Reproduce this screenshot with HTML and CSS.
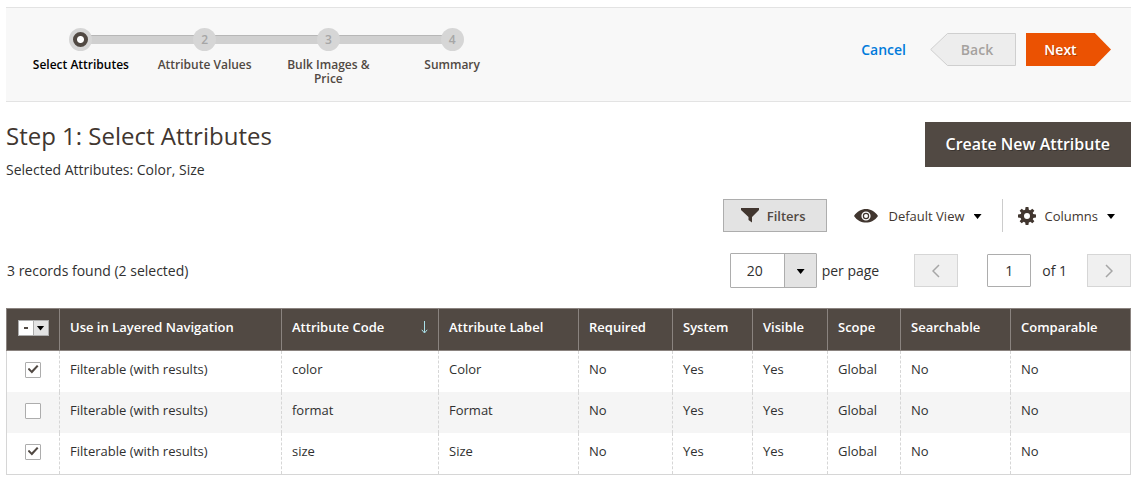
FILE: index.html
```html
<!DOCTYPE html>
<html lang="en">
<head>
<meta charset="utf-8">
<title>Select Attributes</title>
<link rel="stylesheet" href="styles.css">
</head>
<body>
<header class="wizard">
  <ol class="steps">
    <li class="step step-active"><span class="dot"></span><span class="step-label">Select Attributes</span></li>
    <li class="step"><span class="dot">2</span><span class="step-label">Attribute Values</span></li>
    <li class="step"><span class="dot">3</span><span class="step-label">Bulk Images &amp; Price</span></li>
    <li class="step"><span class="dot">4</span><span class="step-label">Summary</span></li>
  </ol>
  <div class="wizard-actions">
    <button class="cancel" type="button">Cancel</button>
    <button class="back" type="button" disabled><svg class="back-shape" viewBox="0 0 86 33" aria-hidden="true"><path d="M.7 16.5 17.5.5H85.500V32.500H17.500Z"/></svg><span class="back-text">Back</span></button>
    <button class="next" type="button">Next</button>
  </div>
</header>
<main>
  <div class="heading">
    <div>
      <h1 class="title">Step 1: Select Attributes</h1>
      <p class="selected">Selected Attributes: Color, Size</p>
    </div>
    <button class="create" type="button">Create New Attribute</button>
  </div>
  <div class="tools">
    <button class="filters" type="button"><svg width="18" height="15" viewBox="0 0 18 15" aria-hidden="true"><path d="M0 0H18V2L11 9V14.500L7.500 12V9L0 2Z"/></svg>Filters</button>
    <button class="tool view" type="button"><svg width="24" height="14" viewBox="0 0 24 14" aria-hidden="true"><path fill-rule="evenodd" d="M0 7C6-2.200 18-2.200 24 7C18 15.800 6 15.800 0 7ZM12 2.400A4.600 4.600 0 1 0 12 11.600A4.600 4.600 0 1 0 12 2.400Z"/><path fill-rule="evenodd" d="M12 3.800A3.200 3.200 0 1 0 12 10.200A3.200 3.200 0 1 0 12 3.800ZM12 5A2 2 0 0 1 12 9A2 2 0 0 1 12 5Z"/></svg><span>Default View</span><i class="caret"></i></button>
    <button class="tool columns" type="button"><svg width="18" height="18" viewBox="-9 -9 18 18" aria-hidden="true"><circle r="4.800" fill="none" stroke="currentColor" stroke-width="3.600"/><path d="M-1.900-6 -1.400-9H1.400L1.900-6ZM-1.900 6-1.400 9H1.400L1.900 6ZM-6-1.900-9-1.400V1.400L-6 1.900ZM6-1.900 9-1.400V1.400L6 1.900Z"/><path transform="rotate(45)" d="M-1.900-6 -1.400-9H1.400L1.900-6ZM-1.900 6-1.400 9H1.400L1.900 6ZM-6-1.900-9-1.400V1.400L-6 1.900ZM6-1.900 9-1.400V1.400L6 1.900Z"/></svg><span>Columns</span><i class="caret"></i></button>
  </div>
  <div class="pager">
    <p class="records">3 records found (2 selected)</p>
    <div class="size-box"><select class="size" id="size"><option>20</option><option>30</option><option>50</option></select></div>
    <label class="per-page" for="size">per page</label>
    <button class="page-nav" type="button" aria-label="Previous page" disabled><svg width="8" height="14" viewBox="0 0 8 14" aria-hidden="true"><path d="M7 1 1 7 7 13"/></svg></button>
    <input class="page" id="page" type="text" value="1">
    <label class="of" for="page">of 1</label>
    <button class="page-nav" type="button" aria-label="Next page" disabled><svg width="8" height="14" viewBox="0 0 8 14" aria-hidden="true"><path d="M1 1 7 7 1 13"/></svg></button>
  </div>
  <table class="grid">
    <colgroup><col class="c-check"><col class="c-nav"><col class="c-code"><col class="c-label"><col class="c-req"><col class="c-sys"><col class="c-vis"><col class="c-scope"><col class="c-search"><col></colgroup>
    <thead>
      <tr>
        <th class="check"><div class="multi"><input class="multi-box" type="checkbox" aria-label="Select all"><button class="multi-toggle" type="button" aria-label="Selection options"><i class="caret"></i></button></div></th>
        <th>Use in Layered Navigation</th>
        <th><div class="sorted">Attribute Code<svg width="7" height="13" viewBox="0 0 7 13" aria-hidden="true"><path d="M3.500 0V11.500M.8 8.800 3.500 12 6.200 8.800"/></svg></div></th>
        <th>Attribute Label</th><th>Required</th><th>System</th><th>Visible</th><th>Scope</th><th>Searchable</th><th>Comparable</th>
      </tr>
    </thead>
    <tbody>
      <tr><td class="check"><input class="tick" type="checkbox" aria-label="color" checked></td><td>Filterable (with results)</td><td>color</td><td>Color</td><td>No</td><td>Yes</td><td>Yes</td><td>Global</td><td>No</td><td>No</td></tr>
      <tr><td class="check"><input class="tick" type="checkbox" aria-label="format"></td><td>Filterable (with results)</td><td>format</td><td>Format</td><td>No</td><td>Yes</td><td>Yes</td><td>Global</td><td>No</td><td>No</td></tr>
      <tr><td class="check"><input class="tick" type="checkbox" aria-label="size" checked></td><td>Filterable (with results)</td><td>size</td><td>Size</td><td>No</td><td>Yes</td><td>Yes</td><td>Global</td><td>No</td><td>No</td></tr>
    </tbody>
  </table>
</main>
</body>
</html>
```
FILE: styles.css
```css
* { box-sizing: border-box; }
body {
  margin: 7px 6px 0;
  background: #fff;
  color: #303030;
  font: 14px/20px "Open Sans", "Noto Sans", sans-serif;
}
button, input, select {
  margin: 0;
  padding: 0;
  border: 0;
  border-radius: 0;
  background: none;
  color: inherit;
  font: inherit;
}
button { font-weight: 600; cursor: pointer; }
svg { display: block; fill: currentColor; }
h1, p, ol { margin: 0; padding: 0; font-weight: 400; }

/* Wizard bar */
.wizard {
  display: flex;
  justify-content: space-between;
  align-items: flex-start;
  padding: 20px 20px 15px 13px;
  border-top: 1px solid #e3e3e3;
  border-bottom: 1px solid #e3e3e3;
  background: #f8f8f8;
}
.steps { display: flex; flex: 1; max-width: 495px; list-style: none; }
.step {
  position: relative;
  display: flex;
  flex: 1;
  flex-direction: column;
  align-items: center;
  gap: 7px;
  color: #514943;
  font-size: 12px;
  font-weight: 600;
  line-height: 14px;
  text-align: center;
}
.step + .step::before {
  position: absolute;
  top: 7px;
  right: 50%;
  width: 100%;
  height: 8px;
  border-top: 1px solid #b7b7b7;
  background: #d0d0d0;
  content: "";
}
.step-label { max-width: 104px; }
.step-active { color: #000; }
.dot {
  z-index: 1;
  width: 23px;
  height: 23px;
  border-radius: 50%;
  background: #d6d6d6;
  color: #a6a6a6;
  line-height: 23px;
}
.step-active .dot { border: 4px solid #d6d6d6; background: radial-gradient(circle, #fff 3px, #514943 4px); }
.wizard-actions { display: flex; align-items: center; padding-top: 5px; }
.cancel { margin-right: 24px; color: #007bdb; }
.back {
  position: relative;
  width: 86px;
  height: 33px;
  margin-right: 10px;
  padding-left: 8px;
  color: #a5a19e;
}
.back-shape { position: absolute; inset: 0; fill: #ededed; stroke: #cfcfcf; }
.back-text { position: relative; }
.next {
  width: 85px;
  height: 33px;
  padding-right: 16px;
  background: #eb5202;
  clip-path: polygon(0 0, 81% 0, 100% 50%, 81% 100%, 0 100%);
  color: #fff;
  text-shadow: 1px 1px 0 rgba(0, 0, 0, .25);
}

/* Heading */
.heading { display: flex; justify-content: space-between; align-items: flex-start; padding-top: 20px; }
.title { font-size: 24px; line-height: 28px; color: #41362f; }
.selected { padding-top: 10px; }
.create {
  padding: 12px 21px 13px;
  background: #514943;
  color: #fff;
  font-size: 16px;
  text-shadow: 1px 1px 0 rgba(0, 0, 0, .3);
}

/* Toolbar */
.tools {
  display: flex;
  justify-content: flex-end;
  padding: 19px 16px 0 0;
  color: #41362f;
  font-size: 13px;
}
.filters {
  display: flex;
  align-items: center;
  gap: 8px;
  height: 33px;
  padding: 0 20px 0 17px;
  border: 1px solid #adadad;
  background: #e3e3e3;
  color: #514943;
}
.filters svg { color: #41362f; }
.tool { display: flex; align-items: center; font-weight: 400; }
.caret {
  width: 8px;
  height: 5px;
  background: #000;
  clip-path: polygon(0 0, 100% 0, 50% 100%);
}
.view { gap: 11px; padding: 0 20px 0 27px; border-right: 1px solid #ccc; }
.view .caret, .columns .caret { margin-top: 2px; }
.view .caret { margin-left: -2px; }
.columns { gap: 9px; padding-left: 15px; }

/* Pager */
.pager { display: flex; align-items: center; padding: 21px 0 20px; }
.records { flex: 1; padding-left: 1px; }
.size-box { position: relative; }
.size-box::after {
  position: absolute;
  top: 16px;
  right: 12px;
  width: 8px;
  height: 5px;
  background: #000;
  clip-path: polygon(0 0, 100% 0, 50% 100%);
  content: "";
  pointer-events: none;
}
.size {
  display: block;
  width: 87px;
  height: 35px;
  padding-left: 16px;
  border: 1px solid #adadad;
  border-radius: 1px;
  appearance: none;
  background: linear-gradient(90deg, #fff 53px, #adadad 53px, #adadad 54px, #e3e3e3 54px);
}
.per-page { margin: 0 35px 0 5px; }
.page-nav {
  display: flex;
  justify-content: center;
  align-items: center;
  width: 44px;
  height: 33px;
  border: 1px solid #d6d6d6;
  background: #f0f0f0;
  color: #a6a6a6;
}
.page-nav svg { fill: none; stroke: currentColor; stroke-width: 1.5; }
.page {
  width: 44px;
  height: 33px;
  margin-left: 29px;
  border: 1px solid #adadad;
  border-radius: 1px;
  background: #fff;
  text-align: center;
}
.of { margin: 0 20px 0 11px; }

/* Attribute grid */
.grid {
  width: 100%;
  border: 1px solid #d6d6d6;
  border-collapse: collapse;
  table-layout: fixed;
  font-size: 13px;
  line-height: 18px;
}
.c-check { width: 53px; }
.c-nav { width: 222px; }
.c-code { width: 157px; }
.c-label { width: 140px; }
.c-req { width: 94px; }
.c-sys { width: 80px; }
.c-vis { width: 75px; }
.c-scope { width: 73px; }
.c-search { width: 110px; }
th, td { padding: 9px 10px 14px; text-align: left; }
th {
  border: 1px solid #8a837f;
  background: #514943;
  color: #fff;
  font-weight: 600;
}
td + td { border-left: 1px dashed #d6d6d6; }
tbody tr:nth-child(even) { background: #f5f5f5; }
.grid .check { padding: 0 0 3px; text-align: center; vertical-align: middle; }
.sorted { display: flex; justify-content: space-between; align-items: center; }
.sorted svg { fill: none; stroke: #a9dfe8; }
.multi { display: flex; width: 31px; height: 16px; margin: 0 auto; border: 1px solid #adadad; }
.multi-box {
  display: flex;
  flex: 1;
  justify-content: center;
  align-items: center;
  appearance: none;
  background: #fff;
}
.multi-box::before { width: 4px; height: 2px; background: #514943; content: ""; }
.multi-toggle {
  display: flex;
  justify-content: center;
  align-items: center;
  width: 15px;
  border-left: 1px solid #adadad;
  background: #e3e3e3;
}
.tick {
  display: block;
  width: 16px;
  height: 16px;
  margin: 0 auto;
  border: 1px solid #adadad;
  border-radius: 1px;
  appearance: none;
  background: #fff;
}
.tick:checked::before {
  display: block;
  width: 11px;
  height: 9px;
  margin: 2px auto;
  background: #514943;
  clip-path: polygon(0 45%, 16% 33%, 38% 62%, 86% 0, 100% 14%, 40% 95%);
  content: "";
}
```
